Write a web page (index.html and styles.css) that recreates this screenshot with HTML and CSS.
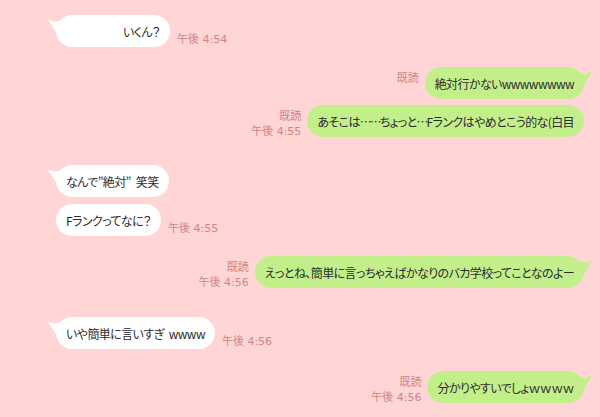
FILE: index.html
```html
<!DOCTYPE html>
<html lang="ja">
<head>
<meta charset="utf-8">
<link rel="stylesheet" href="styles.css">
</head>
<body>
<div class="chat">
  <div class="row left first">
    <div class="bubble white tail"><span class="txt">　　　　　いくん？</span><svg class="tail-l" viewBox="0 0 16 16" width="16" height="16"><path d="M1 2 C5 5 10 5 15 3 L15 15 L9 15 C6 11 3 6 1 2 Z" fill="#fff"/></svg></div>
    <div class="time">午後 4:54</div>
  </div>

  <div class="row right g20">
    <div class="meta"><span>既読</span></div>
    <div class="bubble green tail"><span class="txt">絶対行かないwwwwwwww</span><svg class="tail-r" viewBox="0 0 16 16" width="16" height="16"><path d="M1 2 C5 5 10 5 15 3 L15 15 L9 15 C6 11 3 6 1 2 Z" fill="#c3ef8b"/></svg></div>
  </div>

  <div class="row right g6">
    <div class="meta"><span>既読</span><span>午後 4:55</span></div>
    <div class="bubble green"><span class="txt">あそこは<span class="dots">……</span>ちょっと<span class="dots">…</span>Fランクはやめとこう的な(白目</span></div>
  </div>

  <div class="row left g26">
    <div class="bubble white tail"><span class="txt">なんで”絶対” 笑笑</span><svg class="tail-l" viewBox="0 0 16 16" width="16" height="16"><path d="M1 2 C5 5 10 5 15 3 L15 15 L9 15 C6 11 3 6 1 2 Z" fill="#fff"/></svg></div>
  </div>

  <div class="row left g7">
    <div class="bubble white"><span class="txt">Fランクってなに？</span></div>
    <div class="time">午後 4:55</div>
  </div>

  <div class="row right g20">
    <div class="meta"><span>既読</span><span>午後 4:56</span></div>
    <div class="bubble green tail"><span class="txt">えっとね、簡単に言っちゃえばかなりのバカ学校ってことなのよー</span><svg class="tail-r" viewBox="0 0 16 16" width="16" height="16"><path d="M1 2 C5 5 10 5 15 3 L15 15 L9 15 C6 11 3 6 1 2 Z" fill="#c3ef8b"/></svg></div>
  </div>

  <div class="row left g27">
    <div class="bubble white tail"><span class="txt">いや簡単に言いすぎ wwww</span><svg class="tail-l" viewBox="0 0 16 16" width="16" height="16"><path d="M1 2 C5 5 10 5 15 3 L15 15 L9 15 C6 11 3 6 1 2 Z" fill="#fff"/></svg></div>
    <div class="time">午後 4:56</div>
  </div>

  <div class="row right g22">
    <div class="meta"><span>既読</span><span>午後 4:56</span></div>
    <div class="bubble green tail"><span class="txt">分かりやすいでしょｗｗｗｗ</span><svg class="tail-r" viewBox="0 0 16 16" width="16" height="16"><path d="M1 2 C5 5 10 5 15 3 L15 15 L9 15 C6 11 3 6 1 2 Z" fill="#c3ef8b"/></svg></div>
  </div>
</div>
</body>
</html>
```

FILE: styles.css
```css
html, body {
  margin: 0;
  padding: 0;
  background: #ffd5d5;
}
body {
  width: 600px;
  height: 417px;
  overflow: hidden;
  font-family: "Noto Sans CJK JP", "Noto Sans", sans-serif;
  color: #2b2b2b;
}
.chat {
  display: flex;
  flex-direction: column;
  padding: 15px 16px 0 56px;
}
.row {
  display: flex;
}
.row.left {
  justify-content: flex-start;
}
.row.right {
  justify-content: flex-end;
}
.g6 { margin-top: 6px; }
.g7 { margin-top: 7px; }
.g20 { margin-top: 20px; }
.g22 { margin-top: 22px; }
.g26 { margin-top: 26px; }
.g27 { margin-top: 27px; }

.bubble {
  position: relative;
  display: flex;
  align-items: center;
  height: 32px;
  padding: 0 10px;
  border-radius: 16px;
  font-size: 12px;
  font-feature-settings: "palt";
  letter-spacing: -0.6px;
  word-spacing: 3px;
  white-space: pre;
}
.bubble.white { background: #fff; }
.bubble.green { background: #c3ef8b; }
.dots {
  letter-spacing: -2px;
}
.tail-l {
  position: absolute;
  left: -9px;
  top: 2px;
}
.tail-r {
  position: absolute;
  right: -9px;
  top: 2px;
  transform: scaleX(-1);
}
.time {
  align-self: flex-end;
  margin-left: 7px;
  font-family: "DejaVu Sans", "Noto Sans CJK JP", sans-serif;
  font-size: 11px;
  line-height: 15px;
  color: #d08585;
  white-space: nowrap;
}
.meta {
  display: flex;
  flex-direction: column;
  align-items: flex-end;
  padding-top: 4px;
  margin-right: 6px;
  font-family: "DejaVu Sans", "Noto Sans CJK JP", sans-serif;
  font-size: 11px;
  line-height: 15px;
  color: #d08585;
  white-space: nowrap;
}
```
